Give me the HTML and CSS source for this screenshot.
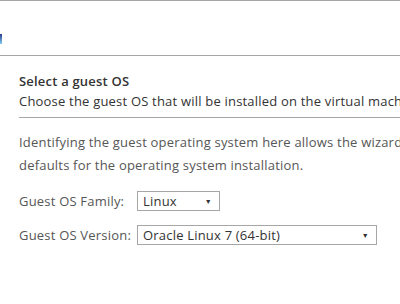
FILE: index.html
```html
<!DOCTYPE html>
<html lang="en">
<head>
  <meta charset="UTF-8" />
  <title>New Virtual Machine - Select a guest OS</title>
  <link rel="stylesheet" href="styles.css">
</head>
<body>
  <div class="wizard">
    <div class="wizard-header">
      <span class="title-tail"></span>
    </div>
    <div class="step">
      <div class="step-head">
        <div class="step-title">Select a guest OS</div>
        <div class="step-desc">Choose the guest OS that will be installed on the virtual machine</div>
      </div>
      <p class="info">Identifying the guest operating system here allows the wizard to provide the appropriate<br>defaults for the operating system installation.</p>
      <div class="form-row">
        <label class="label">Guest OS Family:</label>
        <div class="select small">
          <span>Linux</span>
          <span class="caret">&#9660;</span>
        </div>
      </div>
      <div class="form-row">
        <label class="label">Guest OS Version:</label>
        <div class="select wide">
          <span>Oracle Linux 7 (64-bit)</span>
          <span class="caret">&#9660;</span>
        </div>
      </div>
    </div>
  </div>
</body>
</html>
```

FILE: styles.css
```css
* {
  box-sizing: border-box;
}

body {
  margin: 0;
  background: #fff;
  font-family: 'Open Sans', sans-serif;
  font-size: 13px;
  letter-spacing: 0.2px;
  color: #565656;
  overflow: hidden;
}

.wizard {
  width: 400px;
  border-top: 1px solid #a6a6a6;
}

.wizard-header {
  height: 55px;
  border-bottom: 1px solid #a6a6a6;
  padding-top: 33px;
}

.title-tail {
  display: block;
  width: 2px;
  height: 10px;
  background: linear-gradient(#2b3a8c, #7ed0f0);
}

.step {
  padding: 15px 0 0 19px;
  white-space: nowrap;
}

.step-head {
  border-bottom: 1px solid #a6a6a6;
  padding-bottom: 5px;
}

.step-title {
  font-weight: 600;
  color: #333;
  line-height: 20px;
}

.step-desc {
  color: #333;
  line-height: 21px;
}

.info {
  margin: 13px 0 14px;
  line-height: 23px;
}

.form-row {
  display: flex;
  align-items: center;
  height: 20px;
  margin-bottom: 14px;
}

.label {
  width: 118px;
}

.select {
  display: flex;
  justify-content: space-between;
  align-items: center;
  height: 20px;
  border: 1px solid #a6a6a6;
  padding: 0 7px 0 5px;
  color: #333;
}

.select.small {
  width: 83px;
}

.select.wide {
  width: 240px;
}

.caret {
  font-size: 7px;
  color: #333;
}
```
